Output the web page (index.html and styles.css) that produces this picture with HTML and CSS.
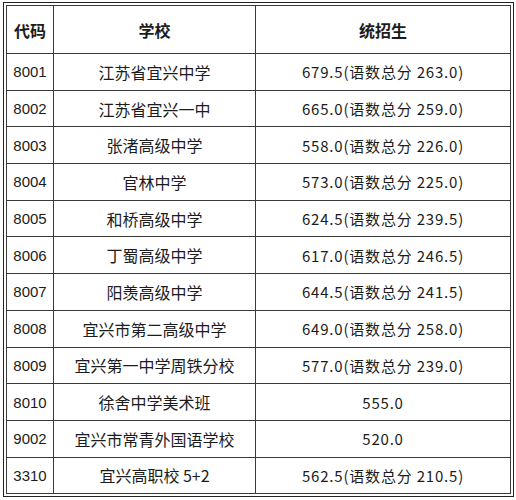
FILE: index.html
```html
<!DOCTYPE html>
<html lang="zh-CN">
<head>
<meta charset="utf-8">
<title>统招生分数线</title>
<link rel="stylesheet" href="styles.css">
</head>
<body>
<div class="frame">
  <table class="scores">
    <colgroup>
      <col class="c-code">
      <col class="c-school">
      <col class="c-score">
    </colgroup>
    <thead>
      <tr>
        <th>代码</th>
        <th>学校</th>
        <th>统招生</th>
      </tr>
    </thead>
    <tbody>
      <tr><td class="code">8001</td><td class="school">江苏省宜兴中学</td><td class="score">679.5(语数总分 263.0)</td></tr>
      <tr><td class="code">8002</td><td class="school">江苏省宜兴一中</td><td class="score">665.0(语数总分 259.0)</td></tr>
      <tr><td class="code">8003</td><td class="school">张渚高级中学</td><td class="score">558.0(语数总分 226.0)</td></tr>
      <tr><td class="code">8004</td><td class="school">官林中学</td><td class="score">573.0(语数总分 225.0)</td></tr>
      <tr><td class="code">8005</td><td class="school">和桥高级中学</td><td class="score">624.5(语数总分 239.5)</td></tr>
      <tr><td class="code">8006</td><td class="school">丁蜀高级中学</td><td class="score">617.0(语数总分 246.5)</td></tr>
      <tr><td class="code">8007</td><td class="school">阳羡高级中学</td><td class="score">644.5(语数总分 241.5)</td></tr>
      <tr><td class="code">8008</td><td class="school">宜兴市第二高级中学</td><td class="score">649.0(语数总分 258.0)</td></tr>
      <tr><td class="code">8009</td><td class="school">宜兴第一中学周铁分校</td><td class="score">577.0(语数总分 239.0)</td></tr>
      <tr><td class="code">8010</td><td class="school">徐舍中学美术班</td><td class="score">555.0</td></tr>
      <tr><td class="code">9002</td><td class="school">宜兴市常青外国语学校</td><td class="score">520.0</td></tr>
      <tr><td class="code">3310</td><td class="school">宜兴高职校 5+2</td><td class="score">562.5(语数总分 210.5)</td></tr>
    </tbody>
  </table>
</div>
</body>
</html>
```

FILE: styles.css
```css
html, body {
  margin: 0;
  padding: 0;
  background: #ffffff;
}

body {
  font-family: "Noto Sans CJK SC", "Liberation Sans", sans-serif;
  color: #1c1c1c;
}

.frame {
  box-sizing: border-box;
  width: 511px;
  margin: 2px 0 0 3px;
  border: 1px solid #222222;
  padding: 2px;
}

.scores {
  width: 100%;
  border-collapse: collapse;
  table-layout: fixed;
  border: 1px solid #222222;
}

.c-code { width: 47px; }
.c-school { width: 202px; }

.scores th,
.scores td {
  border: 1px solid #3a3a3a;
  padding: 0;
  text-align: center;
  vertical-align: middle;
  white-space: nowrap;
}

.scores thead tr {
  height: 48px;
}

.scores tbody tr {
  height: 36.7px;
}

.scores th {
  font-size: 16px;
  font-weight: 700;
}

.code {
  font-family: "Liberation Sans", "Noto Sans CJK SC", sans-serif;
  font-size: 15px;
}

.school {
  font-size: 16px;
}

.score {
  font-size: 15px;
  letter-spacing: 0.8px;
}
```
